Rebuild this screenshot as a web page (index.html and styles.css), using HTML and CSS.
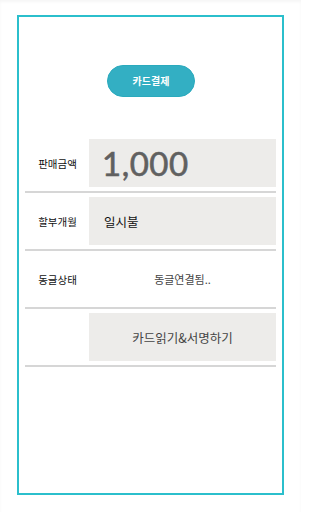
FILE: index.html
```html
<!DOCTYPE html>
<html lang="ko">
<head>
<meta charset="utf-8">
<link rel="stylesheet" href="styles.css">
</head>
<body>
<div class="frame">
  <div class="btn-wrap"><button class="pay-btn">카드결제</button></div>
  <div class="rows">
    <div class="row">
      <div class="label">판매금액</div>
      <div class="box amount">1,000</div>
    </div>
    <div class="row">
      <div class="label">할부개월</div>
      <div class="box install">일시불</div>
    </div>
    <div class="row">
      <div class="label">동글상태</div>
      <div class="box status">동글연결됨..</div>
    </div>
    <div class="row">
      <div class="label"></div>
      <div class="box action">카드읽기&amp;서명하기</div>
    </div>
  </div>
</div>
</body>
</html>
```

FILE: styles.css
```css
html, body {
  margin: 0;
  padding: 0;
  background: #fff;
}
body {
  width: 301px;
  height: 512px;
  overflow: hidden;
  font-family: "Noto Sans CJK KR", "Noto Sans", sans-serif;
  box-shadow: inset 0 2px 3px rgba(0, 0, 0, 0.04);
}
.frame {
  box-sizing: border-box;
  margin: 15px 0 0 17px;
  width: 267px;
  height: 480px;
  border: 2px solid #2bbfcc;
  padding: 48px 6px 0 6px;
}
.btn-wrap {
  display: flex;
  justify-content: center;
  padding-left: 1px;
}
.pay-btn {
  width: 88px;
  height: 32px;
  border: 1px solid #2aaabd;
  border-radius: 16px;
  background: #33afc3;
  color: #fff;
  font-family: "Noto Sans CJK KR", sans-serif;
  font-size: 10px;
  font-weight: 700;
  padding: 0;
  line-height: 30px;
}
.rows {
  margin-top: 38px;
}
.row {
  display: flex;
  padding: 4px 0;
  border-bottom: 2px solid #d6d6d6;
}
.label {
  width: 63px;
  flex: none;
  display: flex;
  align-items: center;
  justify-content: center;
  font-size: 10.5px;
  color: #111;
  padding-left: 1px;
}
.box {
  flex: 1;
  height: 48px;
  display: flex;
  align-items: center;
}
.amount, .install, .action {
  background: #edecea;
}
.amount {
  font-family: "Lato", "Open Sans", sans-serif;
  font-size: 33px;
  color: #606060;
  padding-left: 13px;
  letter-spacing: 0.5px;
  -webkit-text-stroke: 0.6px #606060;
}
.install {
  font-size: 12.5px;
  color: #111;
  padding-left: 15px;
}
.status {
  justify-content: center;
  font-size: 11px;
  color: #444;
}
.action {
  justify-content: center;
  font-size: 12.5px;
  color: #444;
}
```
